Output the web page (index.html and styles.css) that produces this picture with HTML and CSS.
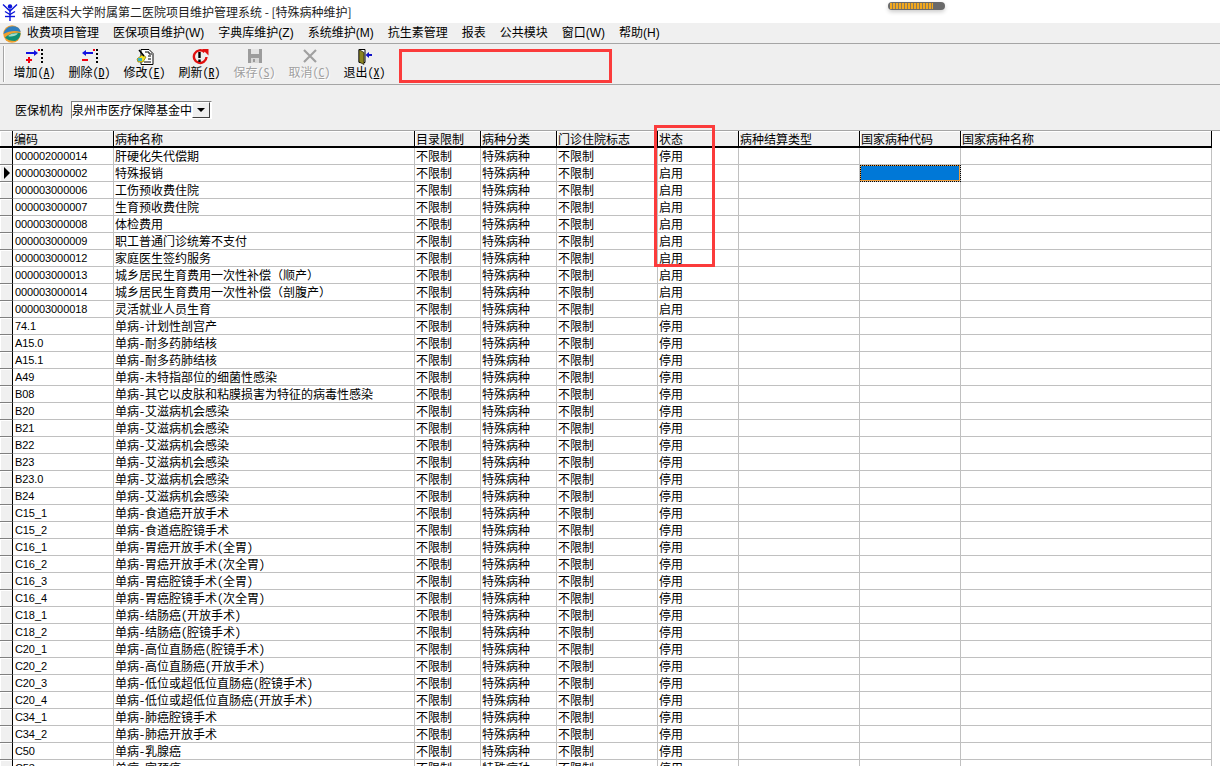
FILE: index.html
```html
<!DOCTYPE html>
<html lang="zh-CN">
<head>
<meta charset="utf-8">
<title>特殊病种维护</title>
<link rel="stylesheet" href="styles.css">
</head>
<body>
<div class="app">
  <header class="titlebar">
    <svg class="title-icon" viewBox="0 0 16 18" width="16" height="18"><g fill="none" stroke="#0a14d8" stroke-width="1.4"><path d="M1 1.500 L8 8 L15 1.500"/><path d="M8 6v12"/><path d="M3 8.500 L8 11.500 L13 8.500"/><path d="M3 13.500h10"/></g><circle cx="8" cy="3.500" r="2.200" fill="#0a14d8"/></svg>
    <span>福建医科大学附属第二医院项目维护管理系统 - [特殊病种维护]</span>
  </header>
  <nav class="menubar">
    <svg class="menu-logo" viewBox="0 0 18 18" width="18" height="18"><circle cx="9" cy="9" r="8.700" fill="#ef9f2e"/><path d="M.5 9C1.500 3 8-1 15 2.500 17 4 17.500 6 17.500 7 12 5 6 6 .5 9Z" fill="#2f7fc0"/><path d="M2 12.500C6 8 12 7 17.500 8 17.500 12 15 15 12 16 8 16 4 15 2 12.500Z" fill="#0f8f74"/><path d="M5 11C8 8.500 12 8 15 8.500 13 11 8 12.500 5 11Z" fill="#9fdccb"/></svg>
    <span class="menu-item">收费项目管理</span>
    <span class="menu-item">医保项目维护(W)</span>
    <span class="menu-item">字典库维护(Z)</span>
    <span class="menu-item">系统维护(M)</span>
    <span class="menu-item">抗生素管理</span>
    <span class="menu-item">报表</span>
    <span class="menu-item">公共模块</span>
    <span class="menu-item">窗口(W)</span>
    <span class="menu-item">帮助(H)</span>
  </nav>
  <div class="toolbar">
    <div class="tool">
      <svg viewBox="0 0 18 16" width="18" height="16"><path d="M0 4h10" stroke="#1212e0" stroke-width="2"/><path d="M8 1l4 3-4 3z" fill="#1212e0"/><path d="M3 8v6M0 11h6" stroke="#f00010" stroke-width="2"/><path d="M15 0h2v2h-2zM15 4h2v2h-2zM15 8h2v2h-2zM15 12h2v2h-2z" fill="#000"/><path d="M12 0h2v2h-2z" fill="#f00010"/></svg>
      <span class="tool-label">增加(<u>A</u>)</span>
    </div>
    <div class="tool">
      <svg viewBox="0 0 18 16" width="18" height="16"><path d="M3 4h9" stroke="#1212e0" stroke-width="2"/><path d="M5 1L1 4l4 3z" fill="#1212e0"/><path d="M1 11h6" stroke="#f00010" stroke-width="2"/><path d="M15 0h2v2h-2zM15 4h2v2h-2zM15 8h2v2h-2zM15 12h2v2h-2z" fill="#000"/><path d="M12 0h2v2h-2z" fill="#f00010"/></svg>
      <span class="tool-label">删除(<u>D</u>)</span>
    </div>
    <div class="tool">
      <svg viewBox="0 0 18 16" width="18" height="16"><path d="M5 .5h8l4 4v11H5z" fill="#fff" stroke="#000"/><path d="M9 3h4v2h3M12 7h3M12 10h3M8 13h7" fill="none" stroke="#000"/><path d="M1 10l5-4 4 2-3 5H2z" fill="#f4e020" stroke="#7a7000" stroke-width=".7"/><path d="M3 1l5 6" stroke="#000" stroke-width="1.500"/><path d="M2 9h4v3H2z" fill="#35b4c8"/></svg>
      <span class="tool-label">修改(<u>E</u>)</span>
    </div>
    <div class="tool">
      <svg viewBox="0 0 18 16" width="18" height="16"><path d="M13.500 3A6.300 6.300 0 1 0 15.500 8" fill="none" stroke="#e01010" stroke-width="2.400"/><path d="M11 0h6.500v6.500z" fill="#e01010"/><path d="M7.300 3h2.400v6H7.300zM7.300 10.500h2.400v2.400H7.300z" fill="#000"/></svg>
      <span class="tool-label">刷新(<u>R</u>)</span>
    </div>
    <div class="tool disabled">
      <svg viewBox="0 0 18 16" width="18" height="16"><path d="M2 0h14v14H2z" fill="#9c9c9c"/><path d="M5 0h8v5H5z" fill="#e4e4e4"/><path d="M5 9h8v5H5z" fill="#d8d8d8"/><path d="M7 10h2v3H7z" fill="#9c9c9c"/></svg>
      <span class="tool-label">保存(<u>S</u>)</span>
    </div>
    <div class="tool disabled">
      <svg viewBox="0 0 18 16" width="18" height="16"><path d="M3 1l12 12M15 1L3 13" stroke="#a0a0a0" stroke-width="2.200"/></svg>
      <span class="tool-label">取消(<u>C</u>)</span>
    </div>
    <div class="tool">
      <svg viewBox="0 0 18 16" width="18" height="16"><path d="M3 .5h6v13H3z" fill="#fff" stroke="#000"/><path d="M3 .5l5 3v12L3 13z" fill="#8a8420" stroke="#000" stroke-width=".6"/><path d="M12 6h4" stroke="#1010c8" stroke-width="2"/><path d="M13 3L9.500 6l3.500 3z" fill="#1010c8"/></svg>
      <span class="tool-label">退出(<u>X</u>)</span>
    </div>
  </div>
  <div class="filter">
    <span class="filter-label">医保机构</span>
    <div class="combo">
      <span class="combo-text">泉州市医疗保障基金中</span>
      <span class="combo-btn"><i class="combo-arrow"></i></span>
    </div>
  </div>
  <table class="grid">
    <colgroup><col class="c0"><col class="c1"><col class="c2"><col class="c3"><col class="c4"><col class="c5"><col class="c6"><col class="c7"><col class="c8"><col class="c9"></colgroup>
    <thead>
      <tr><th class="ind"></th><th>编码</th><th>病种名称</th><th>目录限制</th><th>病种分类</th><th>门诊住院标志</th><th>状态</th><th>病种结算类型</th><th>国家病种代码</th><th>国家病种名称</th></tr>
    </thead>
    <tbody>
      <tr><td class="ind"></td><td class="code">000002000014</td><td>肝硬化失代偿期</td><td>不限制</td><td>特殊病种</td><td>不限制</td><td>停用</td><td></td><td></td><td></td></tr>
      <tr><td class="ind"><i class="pointer"></i></td><td class="code">000003000002</td><td>特殊报销</td><td>不限制</td><td>特殊病种</td><td>不限制</td><td>启用</td><td></td><td class="selected"></td><td></td></tr>
      <tr><td class="ind"></td><td class="code">000003000006</td><td>工伤预收费住院</td><td>不限制</td><td>特殊病种</td><td>不限制</td><td>启用</td><td></td><td></td><td></td></tr>
      <tr><td class="ind"></td><td class="code">000003000007</td><td>生育预收费住院</td><td>不限制</td><td>特殊病种</td><td>不限制</td><td>启用</td><td></td><td></td><td></td></tr>
      <tr><td class="ind"></td><td class="code">000003000008</td><td>体检费用</td><td>不限制</td><td>特殊病种</td><td>不限制</td><td>启用</td><td></td><td></td><td></td></tr>
      <tr><td class="ind"></td><td class="code">000003000009</td><td>职工普通门诊统筹不支付</td><td>不限制</td><td>特殊病种</td><td>不限制</td><td>启用</td><td></td><td></td><td></td></tr>
      <tr><td class="ind"></td><td class="code">000003000012</td><td>家庭医生签约服务</td><td>不限制</td><td>特殊病种</td><td>不限制</td><td>启用</td><td></td><td></td><td></td></tr>
      <tr><td class="ind"></td><td class="code">000003000013</td><td>城乡居民生育费用一次性补偿（顺产）</td><td>不限制</td><td>特殊病种</td><td>不限制</td><td>启用</td><td></td><td></td><td></td></tr>
      <tr><td class="ind"></td><td class="code">000003000014</td><td>城乡居民生育费用一次性补偿（剖腹产）</td><td>不限制</td><td>特殊病种</td><td>不限制</td><td>启用</td><td></td><td></td><td></td></tr>
      <tr><td class="ind"></td><td class="code">000003000018</td><td>灵活就业人员生育</td><td>不限制</td><td>特殊病种</td><td>不限制</td><td>启用</td><td></td><td></td><td></td></tr>
      <tr><td class="ind"></td><td class="code">74.1</td><td>单病-计划性剖宫产</td><td>不限制</td><td>特殊病种</td><td>不限制</td><td>停用</td><td></td><td></td><td></td></tr>
      <tr><td class="ind"></td><td class="code">A15.0</td><td>单病-耐多药肺结核</td><td>不限制</td><td>特殊病种</td><td>不限制</td><td>停用</td><td></td><td></td><td></td></tr>
      <tr><td class="ind"></td><td class="code">A15.1</td><td>单病-耐多药肺结核</td><td>不限制</td><td>特殊病种</td><td>不限制</td><td>停用</td><td></td><td></td><td></td></tr>
      <tr><td class="ind"></td><td class="code">A49</td><td>单病-未特指部位的细菌性感染</td><td>不限制</td><td>特殊病种</td><td>不限制</td><td>停用</td><td></td><td></td><td></td></tr>
      <tr><td class="ind"></td><td class="code">B08</td><td>单病-其它以皮肤和粘膜损害为特征的病毒性感染</td><td>不限制</td><td>特殊病种</td><td>不限制</td><td>停用</td><td></td><td></td><td></td></tr>
      <tr><td class="ind"></td><td class="code">B20</td><td>单病-艾滋病机会感染</td><td>不限制</td><td>特殊病种</td><td>不限制</td><td>停用</td><td></td><td></td><td></td></tr>
      <tr><td class="ind"></td><td class="code">B21</td><td>单病-艾滋病机会感染</td><td>不限制</td><td>特殊病种</td><td>不限制</td><td>停用</td><td></td><td></td><td></td></tr>
      <tr><td class="ind"></td><td class="code">B22</td><td>单病-艾滋病机会感染</td><td>不限制</td><td>特殊病种</td><td>不限制</td><td>停用</td><td></td><td></td><td></td></tr>
      <tr><td class="ind"></td><td class="code">B23</td><td>单病-艾滋病机会感染</td><td>不限制</td><td>特殊病种</td><td>不限制</td><td>停用</td><td></td><td></td><td></td></tr>
      <tr><td class="ind"></td><td class="code">B23.0</td><td>单病-艾滋病机会感染</td><td>不限制</td><td>特殊病种</td><td>不限制</td><td>停用</td><td></td><td></td><td></td></tr>
      <tr><td class="ind"></td><td class="code">B24</td><td>单病-艾滋病机会感染</td><td>不限制</td><td>特殊病种</td><td>不限制</td><td>停用</td><td></td><td></td><td></td></tr>
      <tr><td class="ind"></td><td class="code">C15_1</td><td>单病-食道癌开放手术</td><td>不限制</td><td>特殊病种</td><td>不限制</td><td>停用</td><td></td><td></td><td></td></tr>
      <tr><td class="ind"></td><td class="code">C15_2</td><td>单病-食道癌腔镜手术</td><td>不限制</td><td>特殊病种</td><td>不限制</td><td>停用</td><td></td><td></td><td></td></tr>
      <tr><td class="ind"></td><td class="code">C16_1</td><td>单病-胃癌开放手术(全胃)</td><td>不限制</td><td>特殊病种</td><td>不限制</td><td>停用</td><td></td><td></td><td></td></tr>
      <tr><td class="ind"></td><td class="code">C16_2</td><td>单病-胃癌开放手术(次全胃)</td><td>不限制</td><td>特殊病种</td><td>不限制</td><td>停用</td><td></td><td></td><td></td></tr>
      <tr><td class="ind"></td><td class="code">C16_3</td><td>单病-胃癌腔镜手术(全胃)</td><td>不限制</td><td>特殊病种</td><td>不限制</td><td>停用</td><td></td><td></td><td></td></tr>
      <tr><td class="ind"></td><td class="code">C16_4</td><td>单病-胃癌腔镜手术(次全胃)</td><td>不限制</td><td>特殊病种</td><td>不限制</td><td>停用</td><td></td><td></td><td></td></tr>
      <tr><td class="ind"></td><td class="code">C18_1</td><td>单病-结肠癌(开放手术)</td><td>不限制</td><td>特殊病种</td><td>不限制</td><td>停用</td><td></td><td></td><td></td></tr>
      <tr><td class="ind"></td><td class="code">C18_2</td><td>单病-结肠癌(腔镜手术)</td><td>不限制</td><td>特殊病种</td><td>不限制</td><td>停用</td><td></td><td></td><td></td></tr>
      <tr><td class="ind"></td><td class="code">C20_1</td><td>单病-高位直肠癌(腔镜手术)</td><td>不限制</td><td>特殊病种</td><td>不限制</td><td>停用</td><td></td><td></td><td></td></tr>
      <tr><td class="ind"></td><td class="code">C20_2</td><td>单病-高位直肠癌(开放手术)</td><td>不限制</td><td>特殊病种</td><td>不限制</td><td>停用</td><td></td><td></td><td></td></tr>
      <tr><td class="ind"></td><td class="code">C20_3</td><td>单病-低位或超低位直肠癌(腔镜手术)</td><td>不限制</td><td>特殊病种</td><td>不限制</td><td>停用</td><td></td><td></td><td></td></tr>
      <tr><td class="ind"></td><td class="code">C20_4</td><td>单病-低位或超低位直肠癌(开放手术)</td><td>不限制</td><td>特殊病种</td><td>不限制</td><td>停用</td><td></td><td></td><td></td></tr>
      <tr><td class="ind"></td><td class="code">C34_1</td><td>单病-肺癌腔镜手术</td><td>不限制</td><td>特殊病种</td><td>不限制</td><td>停用</td><td></td><td></td><td></td></tr>
      <tr><td class="ind"></td><td class="code">C34_2</td><td>单病-肺癌开放手术</td><td>不限制</td><td>特殊病种</td><td>不限制</td><td>停用</td><td></td><td></td><td></td></tr>
      <tr><td class="ind"></td><td class="code">C50</td><td>单病-乳腺癌</td><td>不限制</td><td>特殊病种</td><td>不限制</td><td>停用</td><td></td><td></td><td></td></tr>
      <tr><td class="ind"></td><td class="code">C53</td><td>单病-宫颈癌</td><td>不限制</td><td>特殊病种</td><td>不限制</td><td>停用</td><td></td><td></td><td></td></tr>
    </tbody>
  </table>
  <div class="annot annot-toolbar"></div>
  <div class="annot annot-status"></div>
  <div class="pill"><i class="pill-fill"></i></div>
</div>
</body>
</html>
```
FILE: styles.css
```css
html, body {
  margin: 0;
  padding: 0;
  height: 100%;
  overflow: hidden;
  background: #fff;
}
.app {
  position: relative;
  width: 1220px;
  height: 766px;
  overflow: hidden;
  font: 12px/16px "Noto Sans Mono CJK SC", "Noto Sans CJK SC", "Liberation Sans", sans-serif;
  color: #000;
}
.titlebar {
  height: 23px;
  display: flex;
  align-items: center;
  background: #fff;
  color: #222;
  box-sizing: border-box;
  font-family: "Noto Sans CJK SC", "Liberation Sans", sans-serif;
}
.title-icon { margin: 0 4px 0 2px; }
.menubar {
  height: 20px;
  display: flex;
  align-items: center;
  background: #f0f0f0;
  font-family: "Liberation Sans", "Noto Sans CJK SC", sans-serif;
}
.menu-logo { margin: 1px 0 0 3px; flex: none; }
.menu-item { padding: 0 7px; white-space: nowrap; }
.menu-logo + .menu-item { margin-left: -1px; }
.toolbar {
  height: 40px;
  display: flex;
  padding-left: 7px;
  background: #efefef;
  border-top: 1px solid #a5a5a5;
  border-bottom: 1px solid #a5a5a5;
  position: relative;
}
.toolbar::before {
  content: "";
  position: absolute;
  left: 3px;
  top: 2px;
  bottom: 2px;
  width: 1px;
  background: #a5a5a5;
  box-shadow: 1px 0 0 #fff;
}
.tool {
  width: 55px;
  display: flex;
  flex-direction: column;
  align-items: center;
  padding-top: 5px;
  box-sizing: border-box;
}
.tool svg { display: block; height: 16px; }
.tool-label { line-height: 14px; white-space: nowrap; }
.disabled .tool-label { color: #a0a0a0; text-shadow: 1px 1px 0 #fff; }
.filter {
  height: 46px;
  display: flex;
  align-items: center;
  padding: 4px 0 0 15px;
  box-sizing: border-box;
  background: #efefef;
  border-bottom: 1px solid #a5a5a5;
}
.filter-label { margin-right: 8px; }
.combo {
  width: 141px;
  height: 18px;
  display: flex;
  box-sizing: border-box;
  justify-content: space-between;
  background: #fff;
  border: 1px solid;
  border-color: #808080 #fff #fff #808080;
  padding: 0 1px 0 0;
}
.combo-text { line-height: 16px; white-space: nowrap; }
.combo-btn {
  width: 18px;
  height: 16px;
  box-sizing: border-box;
  background: #efefef;
  border: 1px solid;
  border-color: #fff #404040 #404040 #fff;
  display: flex;
  align-items: center;
  justify-content: center;
}
.combo-arrow {
  width: 0;
  height: 0;
  border: 4px solid transparent;
  border-top: 4px solid #000;
  border-bottom: 0;
}
.grid {
  width: 1212px;
  table-layout: fixed;
  border-collapse: separate;
  border-spacing: 0;
  background: #fff;
}
.c0 { width: 13px; }
.c1 { width: 101px; }
.c2 { width: 301px; }
.c3 { width: 66px; }
.c4 { width: 76px; }
.c5 { width: 101px; }
.c6 { width: 81px; }
.c7 { width: 121px; }
.c8 { width: 101px; }
.c9 { width: 251px; }
.grid th, .grid td {
  box-sizing: border-box;
  padding: 0 0 0 1px;
  height: 17px;
  overflow: hidden;
  white-space: nowrap;
  text-align: left;
  font-weight: 400;
  line-height: 16px;
}
.grid th {
  background: #f0f0f0;
  border-right: 1px solid #000;
  border-bottom: 2px solid #000;
  line-height: 15px;
  box-shadow: inset 1px 1px 0 #fff;
}
.grid td {
  border-right: 1px solid #c0c0c0;
  border-bottom: 1px solid #c0c0c0;
}
.grid td.code {
  font: 11px/16px "Liberation Sans", sans-serif;
  letter-spacing: -.1px;
  padding-left: 2px;
}
.grid th.ind, .grid td.ind {
  padding: 0;
  background: #f0f0f0;
  border-right: 1px solid #000;
  border-bottom: 1px solid #808080;
  box-shadow: inset 1px 1px 0 #fff;
}
.grid th.ind { border-bottom: 2px solid #000; }
.pointer {
  display: block;
  width: 0;
  height: 0;
  margin-left: 4px;
  border-left: 6px solid #000;
  border-top: 6px solid transparent;
  border-bottom: 6px solid transparent;
}
.grid td.selected {
  background: #0078d7;
  box-shadow: inset 0 0 0 1px #f0a040;
  outline: 1px dotted #000;
  outline-offset: -1px;
}
.annot {
  position: absolute;
  box-sizing: border-box;
  border: 3px solid #fb3b3b;
}
.annot-toolbar { left: 399px; top: 49px; width: 213px; height: 34px; }
.annot-status { left: 654px; top: 125px; width: 61px; height: 142px; }
.pill {
  position: absolute;
  left: 888px;
  top: 2px;
  width: 57px;
  height: 8px;
  border-radius: 4px;
  background: #6a6a6a;
  box-shadow: 0 2px 4px rgba(0, 0, 0, .2);
}
.pill-fill {
  position: absolute;
  left: 2px;
  top: 1px;
  width: 43px;
  height: 6px;
  background: repeating-linear-gradient(90deg, #f2a81e 0 2px, #8a7a5a 2px 3px);
}
```
